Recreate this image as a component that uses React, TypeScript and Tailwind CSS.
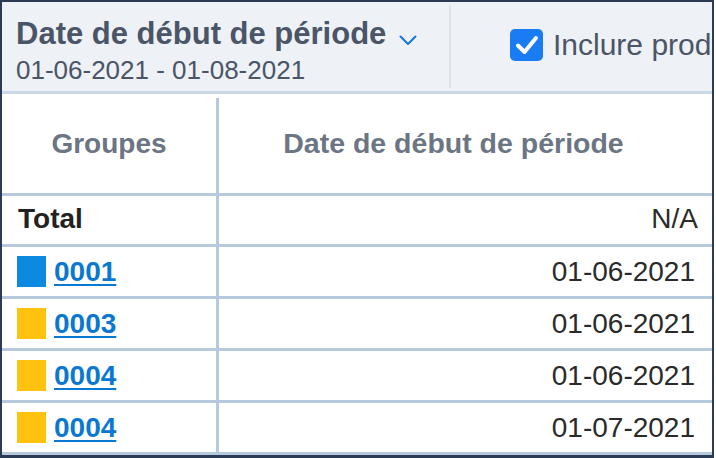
import React from 'react';

type Row = { id: string; color: string; date: string };

const rows: Row[] = [
  { id: '0001', color: 'bg-[#0b8ae0]', date: '01-06-2021' },
  { id: '0003', color: 'bg-[#ffc20e]', date: '01-06-2021' },
  { id: '0004', color: 'bg-[#ffc20e]', date: '01-06-2021' },
  { id: '0004', color: 'bg-[#ffc20e]', date: '01-07-2021' },
];

const ChevronDown = () => (
  <svg width="18" height="11" viewBox="0 0 18 11" className="mt-[17px]">
    <polyline points="1.5,1.5 9,9 16.5,1.5" fill="none" stroke="#1877d6" strokeWidth="2" strokeLinecap="round" strokeLinejoin="round" />
  </svg>
);

const CheckedBox = () => (
  <div className="w-[33px] h-[32px] rounded-[5px] bg-[#1a7cf2] flex items-center justify-center shrink-0">
    <svg width="24" height="22" viewBox="0 0 24 22">
      <path d="M3 11.5 L9.5 18 L21 4" fill="none" stroke="#fff" strokeWidth="4" strokeLinecap="round" strokeLinejoin="round" />
    </svg>
  </div>
);

export default function App() {
  return (
    <div className="w-[716px] h-[458px] bg-white">
      <div className="w-[714px] h-[458px] border-2 border-b-[3px] border-[#2b3a55] overflow-hidden [font-family:'Liberation_Sans',Arial,sans-serif]">
        {/* filter bar */}
        <div className="flex h-[92px] bg-[#eef1f6] border-b-[3px] border-[#cbd8e6] whitespace-nowrap">
          <div className="w-[449px] shrink-0 pl-[14px] pt-[13px] border-r-[2px] border-[#dfe3e9] my-[3px]">
            <div className="flex items-start gap-[13px]">
              <span className="text-[31px] leading-[31px] font-bold text-[#4a5568]">Date de début de période</span>
              <ChevronDown />
            </div>
            <div className="mt-[7px] text-[26px] leading-[28px] text-[#4a5568]">01-06-2021 - 01-08-2021</div>
          </div>
          <div className="flex items-center pl-[59px] gap-[10px] pb-[4px]">
            <CheckedBox />
            <span className="text-[30px] leading-[30px] text-[#4a5568]">Inclure produits</span>
          </div>
        </div>

        {/* table */}
        <div className="flex h-[102px] border-b-[3px] border-[#b7c9dc]">
          <div className="w-[217px] shrink-0 flex items-center justify-center border-r-[3px] border-[#b7c9dc] mt-[4px] pb-[4px]">
            <span className="text-[28px] font-bold text-[#6b7584]">Groupes</span>
          </div>
          <div className="flex-1 flex items-center justify-center pr-[24px]">
            <span className="text-[28.5px] font-bold text-[#6b7584]">Date de début de période</span>
          </div>
        </div>

        <div className="flex h-[51px] border-b-[3px] border-[#b7c9dc]">
          <div className="w-[217px] shrink-0 flex items-center pl-[16px] pb-[3px] border-r-[3px] border-[#b7c9dc]">
            <span className="text-[28px] font-bold text-[#222]">Total</span>
          </div>
          <div className="flex-1 flex items-center justify-end pr-[14px] pb-[3px]">
            <span className="text-[28px] text-[#2a2a2a]">N/A</span>
          </div>
        </div>

        {rows.map((r, i) => (
          <div key={i} className="flex h-[52px] border-b-[3px] border-[#b7c9dc]">
            <div className="w-[217px] shrink-0 flex items-center pl-[15px] gap-[8px] border-r-[3px] border-[#b7c9dc]">
              <span className={`w-[29px] h-[31px] ${r.color}`} />
              <a className="text-[28px] font-bold text-[#0a78d2] underline decoration-2 underline-offset-[3px]">{r.id}</a>
            </div>
            <div className="flex-1 flex items-center justify-end pr-[17px]">
              <span className="text-[28px] text-[#2a2a2a]">{r.date}</span>
            </div>
          </div>
        ))}
      </div>
    </div>
  );
}
